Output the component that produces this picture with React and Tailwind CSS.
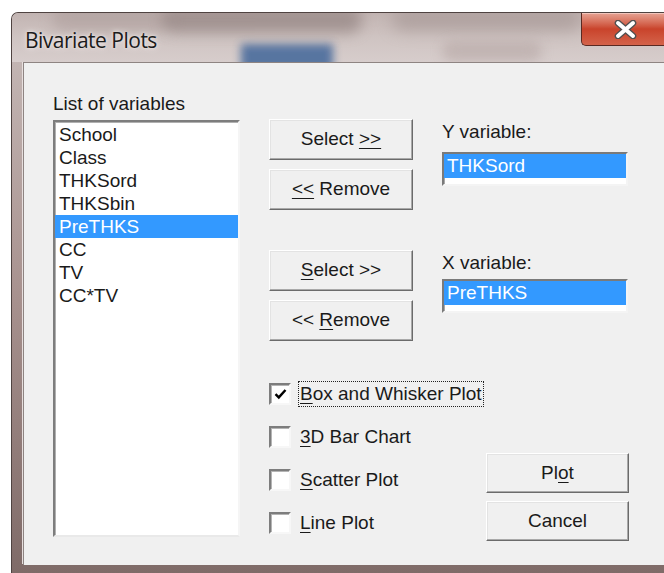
import React, { useState } from 'react';

const variables = ['School', 'Class', 'THKSord', 'THKSbin', 'PreTHKS', 'CC', 'TV', 'CC*TV'];

const sans = { fontFamily: '"Liberation Sans", Arial, sans-serif' };

// classic raised push button
const PushButton = ({ children, className = '' }) => (
  <button
    className={`flex items-center justify-center bg-[#f0f0f0] border border-t-white border-l-white border-r-[#6b6b6b] border-b-[#6b6b6b] shadow-[inset_-1px_-1px_0_#a9a9a9,inset_1px_1px_0_#e3e3e3] text-[19px] text-[#1a1a1a] ${className}`}
  >
    {children}
  </button>
);

const U = ({ children }) => <span className="underline underline-offset-[3px] decoration-1">{children}</span>;

// sunken single-item box used for the chosen Y / X variable
const ChosenBox = ({ value }) => (
  <div className="w-[186px] h-[34px] bg-white border-2 border-t-[#7a7a7a] border-l-[#7a7a7a] border-r-[#f4f4f4] border-b-[#f4f4f4] shadow-[inset_1px_1px_0_#a8a8a8]">
    <div className="h-[24px] bg-[#3399ff] text-white text-[19px] leading-[24px] pl-[3px]">{value}</div>
  </div>
);

const CheckRow = ({ checked, focused, children }) => (
  <div className="flex items-center h-[22px]">
    <div className="w-[22px] h-[22px] bg-white border-2 border-t-[#7d7d7d] border-l-[#7d7d7d] border-r-[#f7f7f7] border-b-[#f7f7f7] shadow-[inset_1px_1px_0_#b4b4b4] flex items-center justify-center">
      {checked && (
        <svg width="13" height="12" viewBox="0 0 13 12">
          <path d="M1.5 6.2 L4.8 9.4 L11.5 2" fill="none" stroke="#000" strokeWidth="2.4" />
        </svg>
      )}
    </div>
    <span
      className={`ml-[7px] px-[1px] h-[26px] leading-[24px] text-[19px] text-[#1a1a1a] border ${focused ? 'border-dotted border-[#222]' : 'border-transparent'}`}
    >
      {children}
    </span>
  </div>
);

export default function App() {
  const [selected] = useState('PreTHKS');

  return (
    <div className="w-[664px] h-[573px] bg-white overflow-hidden pt-[12px] pl-[11px]" style={sans}>
      <div className="w-[653px] h-[561px] flex flex-col rounded-tl-[7px] border-l border-t border-[#4f4341] bg-gradient-to-b from-[#c8bcba] via-[#a8928f] to-[#7f6b68]">
        {/* title bar, glass frame */}
        <div className="relative h-[49px] flex items-start overflow-hidden rounded-tl-[6px] bg-gradient-to-b from-[#c2b4b2] via-[#cfc4c2] to-[#d7cdcc]">
          <div className="absolute left-[40px] top-[-6px] w-[120px] h-[24px] rounded-full bg-[#a89896] opacity-50 blur-[7px]" />
          <div className="absolute left-[150px] top-[-6px] w-[200px] h-[26px] rounded-full bg-[#8a7a78] opacity-60 blur-[7px]" />
          <div className="absolute left-[380px] top-[-4px] w-[190px] h-[22px] rounded-full bg-[#9a8b89] opacity-50 blur-[8px]" />
          <div className="absolute left-[229px] top-[31px] w-[92px] h-[26px] bg-[#4a6c9c] opacity-90 blur-[4px]" />
          <div className="absolute left-[430px] top-[28px] w-[100px] h-[20px] rounded-full bg-[#b5a6a4] opacity-60 blur-[6px]" />
          <span
            className="relative ml-[13px] mt-[14px] text-[21px] leading-[26px] text-[#1b1b1b] [text-shadow:0_0_6px_#efe9e8,0_0_3px_#efe9e8]"
            style={{ fontFamily: '"Open Sans", "Noto Sans", sans-serif', letterSpacing: '-0.5px' }}
          >
            Bivariate Plots
          </span>
          <div className="relative ml-auto w-[83px] h-[34px] -mt-px rounded-bl-[5px] border border-[#5a2a22] border-r-0 bg-gradient-to-b from-[#e6a394] via-[#c9432b] to-[#d4634a] shadow-[inset_0_1px_0_#f3c5bb] flex items-center pl-[32px]">
            <svg width="23" height="19" viewBox="0 0 23 19">
              <path d="M4 3 L19 16 M19 3 L4 16" stroke="#505050" strokeWidth="6.6" strokeLinecap="round" />
              <path d="M4 3 L19 16 M19 3 L4 16" stroke="#ffffff" strokeWidth="4" strokeLinecap="round" />
            </svg>
          </div>
        </div>

        {/* client area */}
        <div className="ml-[11px] w-[642px] h-[503px] bg-[#f0f0f0] border-t border-l border-r border-t-[#8e8482] border-l-[#8e8482] border-r-[#c9c9c9] shadow-[-1px_-1px_0_#e8e0df] flex pl-[29px] pt-[29px]">
          {/* variable list */}
          <div className="flex flex-col w-[187px]">
            <span className="text-[19px] leading-[23px] text-[#1a1a1a]">List of variables</span>
            <div className="mt-[5px] h-[417px] bg-white border-2 border-t-[#7d7d7d] border-l-[#7d7d7d] border-r-[#f5f5f5] border-b-[#e9e9e9] shadow-[inset_1px_1px_0_#b0b0b0] pt-[1px]">
              {variables.map((v) => (
                <div
                  key={v}
                  className={`h-[23px] leading-[23px] text-[19px] pl-[4px] ${v === selected ? 'bg-[#3399ff] text-white' : 'text-[#1a1a1a]'}`}
                >
                  {v}
                </div>
              ))}
            </div>
          </div>

          <div className="ml-[29px] flex flex-col">
            {/* Y variable */}
            <div className="flex mt-[27px]">
              <div className="flex flex-col gap-[9px] w-[144px]">
                <PushButton className="h-[41px]">Select&nbsp;<U>&gt;&gt;</U></PushButton>
                <PushButton className="h-[41px]"><U>&lt;&lt;</U>&nbsp;Remove</PushButton>
              </div>
              <div className="ml-[29px] flex flex-col">
                <span className="mt-[2px] h-[22px] leading-[22px] text-[19px] text-[#1a1a1a]">Y variable:</span>
                <div className="mt-[9px]"><ChosenBox value="THKSord" /></div>
              </div>
            </div>

            {/* X variable */}
            <div className="flex mt-[40px]">
              <div className="flex flex-col gap-[9px] w-[144px]">
                <PushButton className="h-[41px]"><U>S</U>elect&nbsp;&gt;&gt;</PushButton>
                <PushButton className="h-[41px]">&lt;&lt;&nbsp;<U>R</U>emove</PushButton>
              </div>
              <div className="ml-[29px] flex flex-col">
                <span className="mt-[2px] h-[22px] leading-[22px] text-[19px] text-[#1a1a1a]">X variable:</span>
                <div className="mt-[5px]"><ChosenBox value="PreTHKS" /></div>
              </div>
            </div>

            {/* plot options and actions */}
            <div className="flex mt-[42px]">
              <div className="flex flex-col gap-[21px] w-[217px]">
                <CheckRow checked focused><U>B</U>ox and Whisker Plot</CheckRow>
                <CheckRow><U>3</U>D Bar Chart</CheckRow>
                <CheckRow><U>S</U>catter Plot</CheckRow>
                <CheckRow><U>L</U>ine Plot</CheckRow>
              </div>
              <div className="flex flex-col gap-[8px] mt-[70px] w-[143px]">
                <PushButton className="h-[40px]">Pl<U>o</U>t</PushButton>
                <PushButton className="h-[40px]">Cancel</PushButton>
              </div>
            </div>
          </div>
        </div>
      </div>
    </div>
  );
}
